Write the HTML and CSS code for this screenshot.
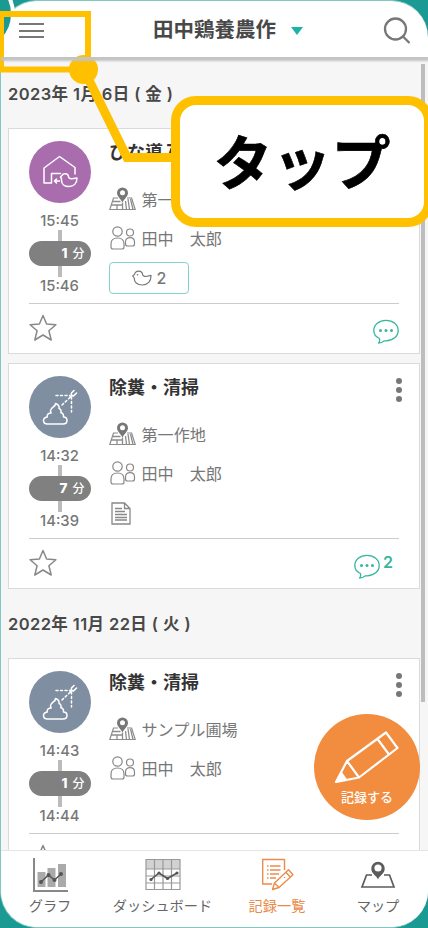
FILE: index.html
```html
<!DOCTYPE html>
<html lang="ja">
<head>
<meta charset="utf-8">
<title>記録一覧</title>
<link rel="stylesheet" href="styles.css">
</head>
<body>
<svg class="defs" width="0" height="0" aria-hidden="true">
  <symbol id="place" viewBox="0 0 27 24">
    <path d="M9 11H4.500L.8 22.500h25.400L22.600 11H18" fill="none" stroke="#8c8c8c" stroke-width="1.200"/>
    <path d="M3.500 14.500h8M2 18h11M8 18v4.500M13.500 15.500v7M16.500 14l1 8.500M19 12l1.500 10.500M21.500 12l2.500 10.500" fill="none" stroke="#8c8c8c" stroke-width="1.300"/>
    <path d="M13.500 15.500C12 12 8 9.500 8 6a5.500 5.500 0 0 1 11 0c0 3.500-4 6-5.500 9.500z" fill="#777"/>
    <circle cx="13.500" cy="5.800" r="2.500" fill="#fff"/>
  </symbol>
  <symbol id="people" viewBox="0 0 26 24">
    <g fill="#fff" stroke="#888" stroke-width="1.200"><circle cx="8" cy="5.500" r="4.700"/><path d="M1.500 21v-3c0-4 2.500-6 6.500-6s6.500 2 6.500 6v3q0 2-2 2h-9q-2 0-2-2z"/><circle cx="20.500" cy="6.500" r="3.500"/><path d="M16 18v-2c0-3 2-4.300 4.500-4.300s4.500 1.300 4.500 4.300v2q0 2-2 2h-5q-2 0-2-2z"/></g>
  </symbol>
  <symbol id="star" viewBox="0 0 28 28">
    <path d="M14 1.500l3.600 8.500 9.300.8-7 6 2.300 9.200-8.200-5-8.200 5 2.300-9.200-7-6 9.300-.8z" fill="none" stroke="#888" stroke-width="1.500" stroke-linejoin="round"/>
  </symbol>
  <symbol id="comment" viewBox="0 0 26 26">
    <path d="M6.500 19.500C3 18 .8 15 .8 11.500.8 5.700 6 1.400 13 1.400s12.200 4.300 12.200 10.100S20 21.800 13 21.800h-1.500q-3 2.300-6 2.300 1.800-2 1-4.600z" fill="none" stroke="#35b69d" stroke-width="1.300" stroke-linejoin="round"/>
    <g fill="#35b69d"><circle cx="7.500" cy="11.600" r="1.500"/><circle cx="13" cy="11.600" r="1.500"/><circle cx="18.500" cy="11.600" r="1.500"/></g>
  </symbol>
  <symbol id="clean" viewBox="0 0 62 62">
    <g fill="none" stroke="#fff" stroke-width="1.500" stroke-linejoin="round" stroke-linecap="round">
      <path d="M26.500 27.500c.5 3-4.500 3.500-5 7 0 1.500.7 2.500.7 2.500-3 0-4.200 1.500-4 4-2.500.5-3.700 2-3.700 3.500 0 2 1.500 3.500 4 3.500H34c2.500 0 4-1.500 4-3.500s-1.500-3.500-3.500-3.500c.2-2.500-.8-4-2.700-4.300 1-2-.3-3.700-1.800-4.200.5-2-.8-4-3.500-5z"/>
      <path d="M33 29l9-8.500M27 19.500h14M42.500 21v15" stroke-dasharray="2 2.500"/>
      <path d="M45 14.500l-2.500 2.500c-1 2 1 3.500 2.500 2.500l2.500-2.500M42.500 19.500l-1.500 1.500" stroke-width="1.600"/>
    </g>
  </symbol>
</svg>

<div class="phone">
  <header class="header">
    <span class="hamburger"><i></i><i></i><i></i></span>
    <h1 class="farm">田中鶏養農作</h1>
    <span class="caret"></span>
    <svg class="search" viewBox="0 0 28 28"><circle cx="12.500" cy="12" r="10.500"/><path d="M20 19.500l6.500 6.500"/></svg>
  </header>

  <main class="list">
    <h2 class="date">2023年 1月 6日 ( 金 )</h2>
    <article class="card">
      <div class="body">
        <div class="side">
          <svg class="badge purple" viewBox="0 0 62 62"><g fill="none" stroke="#fff" stroke-width="1.500" stroke-linejoin="round" stroke-linecap="round"><path d="M22.500 42V32.500h9M22.500 42H15V27l15.500-11.500L46 26.500V33"/><path d="M30.500 40h-5m2-2l-2 2 2 2"/><path d="M31.500 36l1.500-1.500c1.300-2.500 6-2.500 6.500 1 .2 2 1.500 2.500 3.500 2.300l5-.8c0 5.500-3.500 8.500-8 8.500-4.500 0-7.500-2.500-7.500-6v-2z"/></g></svg>
          <span class="time">15:45</span><i class="bar"></i><span class="pill"><b>1</b>分</span><i class="bar"></i><span class="time">15:46</span>
        </div>
        <div class="info">
          <h3>ひな導入</h3>
          <p class="row"><svg class="ic"><use href="#place"/></svg>第一作地</p>
          <p class="row"><svg class="ic"><use href="#people"/></svg>田中　太郎</p>
          <span class="chip"><svg class="chick" viewBox="0 0 20 16"><path d="M.7 6l1.800-1.600C3.500 0 10 0 10.500 4.200c.2 2 1.500 2.300 3.500 2.300L19 5.300c.3 6-3.300 9.700-8.800 9.700C5 15 2 12 2.300 8z" fill="none" stroke="#777" stroke-width="1.200" stroke-linejoin="round"/><circle cx="5.500" cy="4.800" r=".8" fill="#777"/></svg>2</span>
        </div>
      </div>
      <footer class="foot"><svg class="star"><use href="#star"/></svg><span class="talk"><svg><use href="#comment"/></svg></span></footer>
    </article>

    <article class="card">
      <div class="body">
        <div class="side">
          <svg class="badge slate"><use href="#clean"/></svg>
          <span class="time">14:32</span><i class="bar"></i><span class="pill"><b>7</b>分</span><i class="bar"></i><span class="time">14:39</span>
        </div>
        <div class="info">
          <h3>除糞・清掃</h3>
          <p class="row"><svg class="ic"><use href="#place"/></svg>第一作地</p>
          <p class="row"><svg class="ic"><use href="#people"/></svg>田中　太郎</p>
          <svg class="note" viewBox="0 0 20 23"><path d="M1 1h12.500L19 6.500V22H1zM13.500 1v5.500H19M4 6.500h7M4 9.500h10M4 12.500h12M4 15.500h12M4 18h12" fill="none" stroke="#888" stroke-width="1.300"/></svg>
        </div>
        <span class="dots"><i></i><i></i><i></i></span>
      </div>
      <footer class="foot"><svg class="star"><use href="#star"/></svg><span class="talk"><svg><use href="#comment"/></svg><b>2</b></span></footer>
    </article>

    <h2 class="date later">2022年 11月 22日 ( 火 )</h2>
    <article class="card">
      <div class="body">
        <div class="side">
          <svg class="badge slate"><use href="#clean"/></svg>
          <span class="time">14:43</span><i class="bar"></i><span class="pill"><b>1</b>分</span><i class="bar"></i><span class="time">14:44</span>
        </div>
        <div class="info">
          <h3>除糞・清掃</h3>
          <p class="row"><svg class="ic"><use href="#place"/></svg>サンプル圃場</p>
          <p class="row"><svg class="ic"><use href="#people"/></svg>田中　太郎</p>
        </div>
        <span class="dots"><i></i><i></i><i></i></span>
      </div>
      <footer class="foot"><svg class="star"><use href="#star"/></svg></footer>
    </article>
    <i class="scroll"></i>
  </main>

  <nav class="nav">
    <a class="tab graph"><svg viewBox="0 0 36 36"><path d="M5.500 15h8v15h-8zM15.500 11h8v19h-8zM26 7h8v23h-8z" fill="#aaa"/><path d="M2 1v33h34" fill="none" stroke="#888" stroke-width="2"/><path d="M9 25l7.500-7 6 5 6.500-6" fill="none" stroke="#555" stroke-width="1.500"/><g fill="#555"><circle cx="9" cy="25" r="2"/><circle cx="16.500" cy="18" r="2"/><circle cx="22.500" cy="23" r="2"/><circle cx="29" cy="17" r="2"/></g></svg><span>グラフ</span></a>
    <a class="tab dash"><svg viewBox="0 0 36 36"><path d="M1 3h34v9H1z" fill="#d2d2d2"/><path d="M1 2.500h34v30H1zM1 12h34M1 19h34M1 26h34M9.500 3v30M18 3v30M26.500 3v30" fill="none" stroke="#999" stroke-width="1.200"/><path d="M6 22.500l8-6.500 8.500 5.500L32 16" fill="none" stroke="#555" stroke-width="1.600"/><g fill="#555"><circle cx="6" cy="22.500" r="1.600"/><circle cx="14" cy="16" r="1.600"/><circle cx="22.500" cy="21.500" r="1.600"/><circle cx="32" cy="16" r="1.600"/></g></svg><span>ダッシュボード</span></a>
    <a class="tab records"><svg viewBox="0 0 36 36"><g fill="none" stroke="#ed8b4b" stroke-width="1.400" stroke-linejoin="round"><path d="M13 27H3.700V2.500H25.500V13M25.500 20v1M8 9h1.500m1.500 0h10.500M8 13h1.500m1.500 0h10.500M8 17h1.500m1.500 0h9M8 21h1.500m1.500 0h6"/><path d="M13.500 32.500l2-6.500L29.500 12.800l4.500 5L20 30.500zM15.500 26l4.500 4.500M27 15.500l4.500 4.700"/></g></svg><span>記録一覧</span></a>
    <a class="tab map"><svg viewBox="0 0 36 36"><path d="M12 18H6.500L2 30h32L29.500 18H24" fill="none" stroke="#5c5c5c" stroke-width="1.700"/><path d="M18 22.500c-1.500-4-6.700-5.500-6.700-11a6.700 6.700 0 0 1 13.400 0c0 5.500-5.200 7-6.700 11z" fill="#5c5c5c"/><circle cx="18" cy="11" r="3.600" fill="#fff"/></svg><span>マップ</span></a>
  </nav>
</div>

<a class="fab">
  <svg viewBox="0 0 64 52"><path d="M1 51L12 30 51 1.500l11.500 15.500L24 46.500zM12 30l12 16.500M42.500 8L54 23.500" fill="none" stroke="#fff" stroke-width="2.200" stroke-linejoin="round"/><path d="M1 51l5.500-10.500 6 8.500z" fill="#fff"/></svg>
  <span>記録する</span>
</a>

<svg class="marks" viewBox="0 0 428 928">
  <circle cx="-24" cy="14" r="37" fill="#1a9a93" stroke="#fff" stroke-width="4"/>
  <path d="M.5 50V891" stroke="#7fc9c5"/>
  <g fill="none" stroke="#ffc000"><path d="M0 14H88V69.500H0" stroke-width="6"/><path d="M1 14v55.500" stroke-width="6"/><path d="M84 70l43 87.500h48" stroke-width="9"/></g>
  <circle cx="83.500" cy="69.500" r="14.500" fill="#ffc000"/>
</svg>
<div class="callout">タップ</div>
</body>
</html>
```
FILE: styles.css
```css
* { box-sizing: border-box; }
body {
  margin: 0;
  width: 428px;
  height: 928px;
  position: relative;
  overflow: hidden;
  background: #1a9a93;
  color: #777;
  font-family: Inter, "Noto Sans CJK JP", sans-serif;
}
h1, h2, h3, p { margin: 0; }
i { display: block; }
.defs { position: absolute; }

.phone {
  width: 428px;
  height: 928px;
  border: 1px solid #7fc9c5;
  border-right: 0;
  border-radius: 37px;
  overflow: hidden;
  background: #fff;
  display: flex;
  flex-direction: column;
}

.header {
  height: 56px;
  flex: none;
  display: flex;
  align-items: center;
  padding: 0 17px 0 18px;
  position: relative;
  box-shadow: 0 3px 2px 1px #c3c3c3;
  z-index: 1;
}
.hamburger { width: 25px; display: grid; gap: 4.500px; margin-top: 3px; }
.hamburger i { height: 2px; background: #777; }
.farm { margin: 1px 0 0 109px; font-size: 20.500px; line-height: 30px; color: #484848; font-weight: 700; white-space: nowrap; }
.caret { margin: 3px 0 0 15px; border: 6px solid transparent; border-top: 8px solid #1bb3a8; border-bottom: 0; }
.search { width: 28px; height: 28px; margin: 3px 0 0 auto; fill: none; stroke: #777; stroke-width: 2.300; }

.list {
  height: 793px;
  flex: none;
  position: relative;
  overflow: hidden;
  background: #f6f6f6;
  padding: 0 8px 0 7px;
}
.date {
  height: 71px;
  padding-top: 24px;
  font-size: 16.500px;
  line-height: 26px;
  letter-spacing: .4px;
  font-weight: 600;
  color: #484848;
  white-space: nowrap;
}
.date.later { height: 60px; padding-top: 13px; }
.card {
  height: 226px;
  border: 1px solid #dadada;
  background: #fff;
  padding: 12px 20px 0 19.500px;
  margin-bottom: 9px;
}
.body { height: 163px; border-bottom: 1px solid #ccc; display: flex; }
.side { width: 62px; display: flex; flex-direction: column; align-items: center; }
.badge { width: 62px; height: 62px; border-radius: 50%; flex: none; }
.purple { background: #a96dae; }
.slate { background: #7f8ea1; }
.time { font-size: 14.800px; line-height: 18px; color: #777; font-weight: 500; }
.side .time:nth-of-type(1) { margin-top: 9px; }
.bar { width: 4px; height: 11px; flex: none; background: #bbb; }
.pill {
  width: 62px;
  height: 25px;
  flex: none;
  border-radius: 13px;
  background: #808080;
  color: #fff;
  font-size: 12px;
  font-weight: 500;
  line-height: 25px;
  text-align: right;
  padding-right: 6px;
}
.pill b { font-size: 13.500px; margin-right: 5px; font-weight: 800; }

.info { margin-left: 18.500px; flex: 1; }
.info h3 { font-size: 18px; line-height: 24px; height: 38px; color: #333; font-weight: 700; }
.row { height: 39px; display: flex; align-items: center; gap: 5.500px; font-size: 16.100px; white-space: nowrap; }
.ic { width: 27px; height: 24px; flex: none; }
.chip {
  width: 80px;
  height: 32px;
  margin-top: 5px;
  border: 1px solid #82d3cc;
  border-radius: 4px;
  display: flex;
  align-items: center;
  justify-content: center;
  gap: 5px;
  font-size: 16px;
  font-weight: 500;
}
.chick { width: 20px; height: 16px; }
.note { display: block; width: 20px; height: 23px; margin: 10px 0 0 2px; }
.dots { display: grid; gap: 3px; align-content: start; margin: 2px -3px 0 0; }
.dots i { width: 6px; height: 6px; border-radius: 50%; background: #777; }
.foot { display: flex; justify-content: space-between; padding-top: 10px; }
.star { width: 28px; height: 28px; }
.talk { display: flex; gap: 3px; margin-top: 5px; }
.talk svg { width: 26px; height: 26px; }
.talk b { color: #35b69d; font-size: 16px; line-height: 17px; font-weight: 600; margin-right: 6px; }
.scroll { position: absolute; right: 3px; top: 7px; width: 4px; height: 638px; background: #bdbdbd; }

.nav {
  height: 78px;
  flex: none;
  border-top: 1px solid #e5e5e5;
  background: #fff;
  display: grid;
  grid-template-columns: 98px 127px 102px 100px;
  color: #666;
}
.tab { display: flex; flex-direction: column; align-items: center; padding-top: 6px; font-size: 14.200px; line-height: 20px; white-space: nowrap; }
.tab svg { width: 36px; height: 36px; margin-bottom: 3px; }
.records { color: #e98a4b; }

.fab {
  position: absolute;
  left: 314px;
  top: 714px;
  width: 106px;
  height: 106px;
  border-radius: 50%;
  background: #f28c3f;
  color: #fff;
  display: flex;
  flex-direction: column;
  align-items: center;
  padding-top: 17px;
  font-size: 13px;
  font-weight: 500;
  line-height: 18px;
}
.fab svg { width: 64px; height: 52px; margin-bottom: 5px; }

.marks { position: absolute; left: 0; top: 0; width: 428px; height: 928px; }
.callout {
  position: absolute;
  left: 171px;
  top: 96px;
  width: 262px;
  height: 131px;
  border: 9px solid #ffc000;
  border-radius: 25px;
  background: #fff;
  color: #000;
  font-family: "Noto Sans CJK JP", sans-serif;
  font-size: 59px;
  font-weight: 700;
  line-height: 109px;
  text-align: center;
  -webkit-text-stroke: .6px #000;
}
```
